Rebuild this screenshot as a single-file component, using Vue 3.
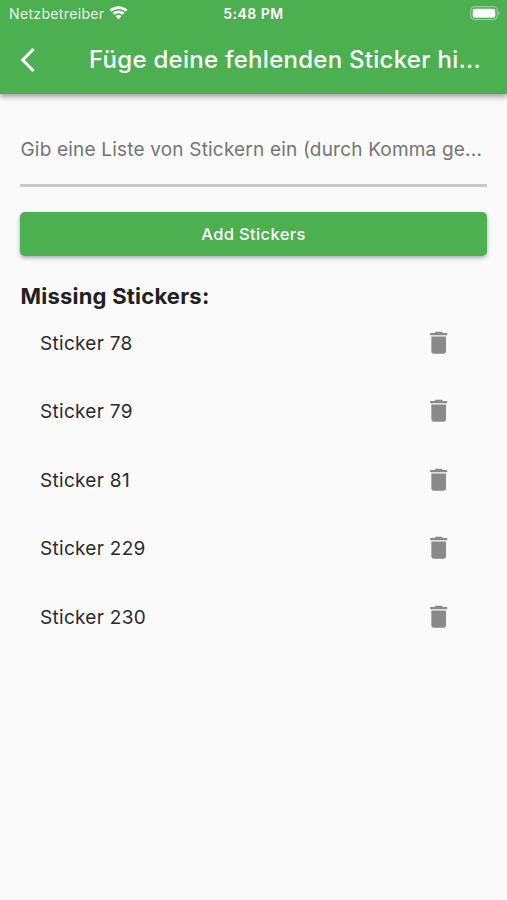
<script setup>
import { ref } from 'vue'

const stickers = ref([78, 79, 81, 229, 230])

function removeSticker(number) {
  stickers.value = stickers.value.filter((n) => n !== number)
}
</script>

<template>
  <div class="screen">
    <header class="app-bar">
      <div class="status">
        <div class="carrier">
          <span class="carrier-name">Netzbetreiber</span>
          <svg class="wifi" viewBox="0 0 19 14" width="19" height="14">
            <path d="M9.5 0.2C6 .2 2.9 1.5.5 3.7l1.9 2C4.300 3.900 6.800 2.900 9.500 2.900s5.200 1 7.100 2.800l1.900-2C16.100 1.500 13 .2 9.500.2z" />
            <path d="M9.500 4.600c-2.300 0-4.300.9-5.900 2.300l1.800 1.900c1.100-1 2.500-1.600 4.100-1.600s3 .6 4.100 1.600l1.800-1.900C13.800 5.500 11.800 4.600 9.500 4.600z" />
            <path d="M9.500 8.900c-1.200 0-2.200.4-3 1.100l3 3.400 3-3.400c-.8-.7-1.800-1.100-3-1.100z" />
          </svg>
        </div>
        <span class="time">5:48 PM</span>
        <svg class="battery" viewBox="0 0 31 15" width="31" height="15">
          <rect x=".7" y=".7" width="26.600" height="13" rx="4" class="battery-case" />
          <rect x="2.700" y="2.700" width="22.600" height="9" rx="2" class="battery-fill" />
          <path d="M28.500 5c1.400.6 1.400 3.800 0 4.400z" class="battery-tip" />
        </svg>
      </div>
      <div class="toolbar">
        <svg class="back" viewBox="0 0 16 26" width="16" height="26">
          <path d="M13.500 2L2.700 13l10.800 11" />
        </svg>
        <h1 class="title">Füge deine fehlenden Sticker hi...</h1>
      </div>
    </header>

    <main class="content">
      <div class="field"><span class="hint">Gib eine Liste von Stickern ein (durch Komma ge...</span></div>
      <button class="add" type="button">Add Stickers</button>
      <h2 class="heading">Missing Stickers:</h2>
      <ul class="list">
        <li v-for="number in stickers" :key="number" class="row">
          <span class="name">Sticker {{ number }}</span>
          <button class="delete" type="button" @click="removeSticker(number)">
            <svg viewBox="0 0 24 24" width="29.4" height="29.4">
              <path d="M6 19c0 1.100.9 2 2 2h8c1.100 0 2-.9 2-2V7H6v12zM19 4h-3.500l-1-1h-5l-1 1H5v2h14V4z" />
            </svg>
          </button>
        </li>
      </ul>
    </main>
  </div>
</template>

<style>
body {
  background: #fafafa;
}
</style>

<style scoped>
.screen {
  display: flex;
  flex-direction: column;
  height: 900px;
  overflow: hidden;
  background: #fafafa;
  color: #2b2b2b;
  font-family: Inter, "Liberation Sans", sans-serif;
}

.app-bar {
  flex: none;
  height: 94px;
  background: #4caf50;
  color: #fff;
  box-shadow: 0 2px 5px rgba(0, 0, 0, 0.2), 0 3px 6px rgba(0, 0, 0, 0.22);
}

.status {
  display: grid;
  grid-template-columns: 1fr auto 1fr;
  align-items: center;
  height: 27px;
  padding: 0 6px 0 9px;
}

.carrier {
  display: flex;
  align-items: center;
  gap: 5px;
}

.carrier-name {
  font-size: 14px;
  letter-spacing: 0.35px;
  color: rgba(255, 255, 255, 0.9);
}

.wifi,
.battery {
  display: block;
}

.wifi {
  margin-top: -1px;
  fill: #fff;
}

.time {
  margin-right: 3px;
  font-size: 14px;
  font-weight: 600;
  letter-spacing: 0.5px;
}

.battery {
  justify-self: end;
}

.battery-case {
  fill: none;
  stroke: rgba(255, 255, 255, 0.4);
  stroke-width: 1.2;
}

.battery-fill {
  fill: #fff;
}

.battery-tip {
  fill: rgba(255, 255, 255, 0.45);
}

.toolbar {
  display: flex;
  align-items: center;
  height: 65px;
  padding-left: 20px;
}

.back {
  flex: none;
  margin-right: 53px;
  fill: none;
  stroke: #fff;
  stroke-width: 3.2;
}

.title {
  margin: 0;
  font-size: 24px;
  font-weight: 500;
  letter-spacing: 0.27px;
  white-space: nowrap;
}

.content {
  display: flex;
  flex-direction: column;
  padding: 27px 20px 0 20px;
}

.field {
  height: 63px;
  padding-left: 0.5px;
  border-bottom: 3px solid #c8c8c8;
  line-height: 58px;
}

.hint {
  font-size: 19px;
  letter-spacing: 0.19px;
  color: #757575;
  white-space: nowrap;
}

.add {
  height: 44px;
  margin: 25px 0 0;
  padding: 0;
  border: 0;
  border-radius: 5px;
  background: #4caf50;
  box-shadow: 0 2px 4px rgba(0, 0, 0, 0.32);
  color: #fff;
  font: 500 16.500px Inter, "Liberation Sans", sans-serif;
  letter-spacing: 0.35px;
}

.heading {
  margin: 26px 0 0 0.5px;
  color: #212121;
  font-size: 22px;
  font-weight: 700;
  line-height: 28px;
  letter-spacing: 0.22px;
}

.list {
  margin: -1px 0 0;
  padding: 0 34px 0 20px;
  list-style: none;
}

.row {
  display: flex;
  align-items: center;
  justify-content: space-between;
  height: 68.500px;
}

.name {
  font-size: 19px;
  letter-spacing: 0.3px;
}

.delete {
  display: flex;
  margin: -1.500px 0 0;
  padding: 0;
  border: 0;
  background: none;
}

.delete svg {
  fill: #8a8a8a;
}
</style>
